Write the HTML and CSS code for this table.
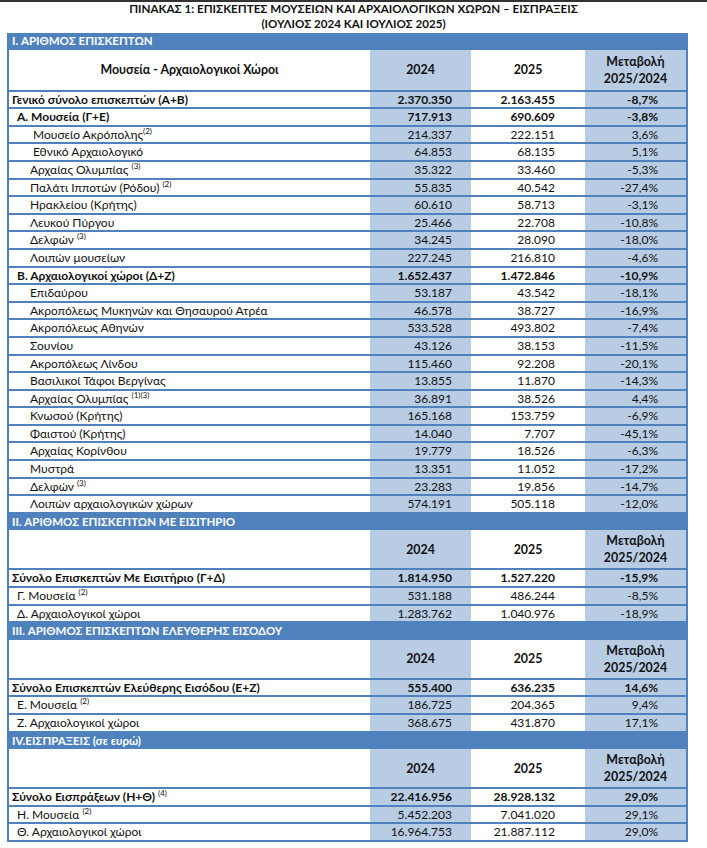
FILE: index.html
```html
<!DOCTYPE html>
<html lang="el">
<head>
    <meta charset="UTF-8">
    <meta name="viewport" content="width=device-width, initial-scale=1.0">
    <title>Πίνακας 1 - Επισκέπτες μουσείων</title>
    <link rel="stylesheet" href="styles.css">
</head>
<body>

    <div class="topbar"></div>

    <h1 class="title">ΠΙΝΑΚΑΣ 1: ΕΠΙΣΚΕΠΤΕΣ ΜΟΥΣΕΙΩΝ ΚΑΙ ΑΡΧΑΙΟΛΟΓΙΚΩΝ ΧΩΡΩΝ – ΕΙΣΠΡΑΞΕΙΣ<br>(ΙΟΥΛΙΟΣ 2024 ΚΑΙ ΙΟΥΛΙΟΣ 2025)</h1>

    <table class="stats">
        <colgroup>
            <col class="c-name">
            <col class="c-y1">
            <col class="c-y2">
            <col class="c-chg">
        </colgroup>

        <tbody>
            <tr class="section"><td colspan="4">I. ΑΡΙΘΜΟΣ ΕΠΙΣΚΕΠΤΩΝ</td></tr>
            <tr class="head first">
                <td class="name">Μουσεία - Αρχαιολογικοί Χώροι</td>
                <td class="y1">2024</td>
                <td class="y2">2025</td>
                <td class="chg">Μεταβολή<br>2025/2024</td>
            </tr>
            <tr class="bold"><td class="name">Γενικό σύνολο επισκεπτών (Α+Β)</td><td class="y1">2.370.350</td><td class="y2">2.163.455</td><td class="chg">-8,7%</td></tr>
            <tr class="bold"><td class="name l1">Α. Μουσεία (Γ+Ε)</td><td class="y1">717.913</td><td class="y2">690.609</td><td class="chg">-3,8%</td></tr>
            <tr><td class="name l3">Μουσείο Ακρόπολης<sup>(2)</sup></td><td class="y1">214.337</td><td class="y2">222.151</td><td class="chg">3,6%</td></tr>
            <tr><td class="name l3">Εθνικό Αρχαιολογικό</td><td class="y1">64.853</td><td class="y2">68.135</td><td class="chg">5,1%</td></tr>
            <tr><td class="name l2">Αρχαίας Ολυμπίας <sup>(3)</sup></td><td class="y1">35.322</td><td class="y2">33.460</td><td class="chg">-5,3%</td></tr>
            <tr><td class="name l2">Παλάτι Ιπποτών (Ρόδου) <sup>(2)</sup></td><td class="y1">55.835</td><td class="y2">40.542</td><td class="chg">-27,4%</td></tr>
            <tr><td class="name l2">Ηρακλείου (Κρήτης)</td><td class="y1">60.610</td><td class="y2">58.713</td><td class="chg">-3,1%</td></tr>
            <tr><td class="name l2">Λευκού Πύργου</td><td class="y1">25.466</td><td class="y2">22.708</td><td class="chg">-10,8%</td></tr>
            <tr><td class="name l2">Δελφών <sup>(3)</sup></td><td class="y1">34.245</td><td class="y2">28.090</td><td class="chg">-18,0%</td></tr>
            <tr><td class="name l2">Λοιπών μουσείων</td><td class="y1">227.245</td><td class="y2">216.810</td><td class="chg">-4,6%</td></tr>
            <tr class="bold"><td class="name l1">Β. Αρχαιολογικοί χώροι (Δ+Ζ)</td><td class="y1">1.652.437</td><td class="y2">1.472.846</td><td class="chg">-10,9%</td></tr>
            <tr><td class="name l2">Επιδαύρου</td><td class="y1">53.187</td><td class="y2">43.542</td><td class="chg">-18,1%</td></tr>
            <tr><td class="name l2">Ακροπόλεως Μυκηνών και Θησαυρού Ατρέα</td><td class="y1">46.578</td><td class="y2">38.727</td><td class="chg">-16,9%</td></tr>
            <tr><td class="name l2">Ακροπόλεως Αθηνών</td><td class="y1">533.528</td><td class="y2">493.802</td><td class="chg">-7,4%</td></tr>
            <tr><td class="name l2">Σουνίου</td><td class="y1">43.126</td><td class="y2">38.153</td><td class="chg">-11,5%</td></tr>
            <tr><td class="name l2">Ακροπόλεως Λίνδου</td><td class="y1">115.460</td><td class="y2">92.208</td><td class="chg">-20,1%</td></tr>
            <tr><td class="name l2">Βασιλικοί Τάφοι Βεργίνας</td><td class="y1">13.855</td><td class="y2">11.870</td><td class="chg">-14,3%</td></tr>
            <tr><td class="name l2">Αρχαίας Ολυμπίας <sup>(1)(3)</sup></td><td class="y1">36.891</td><td class="y2">38.526</td><td class="chg">4,4%</td></tr>
            <tr><td class="name l2">Κνωσού (Κρήτης)</td><td class="y1">165.168</td><td class="y2">153.759</td><td class="chg">-6,9%</td></tr>
            <tr><td class="name l2">Φαιστού (Κρήτης)</td><td class="y1">14.040</td><td class="y2">7.707</td><td class="chg">-45,1%</td></tr>
            <tr><td class="name l2">Αρχαίας Κορίνθου</td><td class="y1">19.779</td><td class="y2">18.526</td><td class="chg">-6,3%</td></tr>
            <tr><td class="name l2">Μυστρά</td><td class="y1">13.351</td><td class="y2">11.052</td><td class="chg">-17,2%</td></tr>
            <tr><td class="name l2">Δελφών <sup>(3)</sup></td><td class="y1">23.283</td><td class="y2">19.856</td><td class="chg">-14,7%</td></tr>
            <tr><td class="name l2">Λοιπών αρχαιολογικών χώρων</td><td class="y1">574.191</td><td class="y2">505.118</td><td class="chg">-12,0%</td></tr>
        </tbody>

        <tbody>
            <tr class="section"><td colspan="4">II. ΑΡΙΘΜΟΣ ΕΠΙΣΚΕΠΤΩΝ ΜΕ ΕΙΣΙΤΗΡΙΟ</td></tr>
            <tr class="head">
                <td class="name"></td>
                <td class="y1">2024</td>
                <td class="y2">2025</td>
                <td class="chg">Μεταβολή<br>2025/2024</td>
            </tr>
            <tr class="bold"><td class="name">Σύνολο Επισκεπτών Με Εισιτήριο (Γ+Δ)</td><td class="y1">1.814.950</td><td class="y2">1.527.220</td><td class="chg">-15,9%</td></tr>
            <tr><td class="name l1">Γ. Μουσεία <sup>(2)</sup></td><td class="y1">531.188</td><td class="y2">486.244</td><td class="chg">-8,5%</td></tr>
            <tr><td class="name l1">Δ. Αρχαιολογικοί χώροι</td><td class="y1">1.283.762</td><td class="y2">1.040.976</td><td class="chg">-18,9%</td></tr>
        </tbody>

        <tbody>
            <tr class="section"><td colspan="4">III. ΑΡΙΘΜΟΣ ΕΠΙΣΚΕΠΤΩΝ ΕΛΕΥΘΕΡΗΣ ΕΙΣΟΔΟΥ</td></tr>
            <tr class="head">
                <td class="name"></td>
                <td class="y1">2024</td>
                <td class="y2">2025</td>
                <td class="chg">Μεταβολή<br>2025/2024</td>
            </tr>
            <tr class="bold"><td class="name">Σύνολο Επισκεπτών Ελεύθερης Εισόδου (Ε+Ζ)</td><td class="y1">555.400</td><td class="y2">636.235</td><td class="chg">14,6%</td></tr>
            <tr><td class="name l1">Ε. Μουσεία <sup>(2)</sup></td><td class="y1">186.725</td><td class="y2">204.365</td><td class="chg">9,4%</td></tr>
            <tr><td class="name l1">Ζ. Αρχαιολογικοί χώροι</td><td class="y1">368.675</td><td class="y2">431.870</td><td class="chg">17,1%</td></tr>
        </tbody>

        <tbody>
            <tr class="section"><td colspan="4">IV.ΕΙΣΠΡΑΞΕΙΣ (σε ευρώ)</td></tr>
            <tr class="head">
                <td class="name"></td>
                <td class="y1">2024</td>
                <td class="y2">2025</td>
                <td class="chg">Μεταβολή<br>2025/2024</td>
            </tr>
            <tr class="bold"><td class="name">Σύνολο Εισπράξεων (Η+Θ) <sup>(4)</sup></td><td class="y1">22.416.956</td><td class="y2">28.928.132</td><td class="chg">29,0%</td></tr>
            <tr><td class="name l1">Η. Μουσεία <sup>(2)</sup></td><td class="y1">5.452.203</td><td class="y2">7.041.020</td><td class="chg">29,1%</td></tr>
            <tr><td class="name l1">Θ. Αρχαιολογικοί χώροι</td><td class="y1">16.964.753</td><td class="y2">21.887.112</td><td class="chg">29,0%</td></tr>
        </tbody>
    </table>

</body>
</html>
```

FILE: styles.css
```css
body {
    margin: 0;
    font-family: Lato, "Open Sans", sans-serif;
    font-size: 12px;
    color: #111;
    background-color: #fff;
}
.topbar {
    height: 2px;
    background-color: #333;
}
.title {
    margin: -1px 0 2px;
    text-align: center;
    font-size: 11.6px;
    font-weight: bold;
    line-height: 15px;
}
.stats {
    width: 679px;
    margin-left: 7px;
    border-collapse: collapse;
    table-layout: fixed;
}
.c-name { width: 362px; }
.c-y1 { width: 101px; }
.c-y2 { width: 114px; }
.c-chg { width: 102px; }
.stats td {
    height: 15.6px;
    padding: 0;
    line-height: 15.6px;
    border-bottom: 2px solid #4f81bd;
    white-space: nowrap;
}
.stats td:first-child {
    border-left: 2px solid #4f81bd;
}
.stats td:last-child {
    border-right: 2px solid #4f81bd;
}
.stats .y1,
.stats .chg {
    background-color: #b8cce4;
}
.stats .y1 {
    text-align: right;
    padding-right: 19px;
}
.stats .y2 {
    text-align: right;
    padding-right: 30px;
}
.stats .chg {
    text-align: right;
    padding-right: 28px;
}
.stats .name {
    padding-left: 3px;
}
.stats .name.l1 { padding-left: 8px; }
.stats .name.l2 { padding-left: 21px; }
.stats .name.l3 { padding-left: 24px; }
.bold td {
    font-weight: bold;
}
.stats .section td {
    background-color: #4f81bd;
    color: #fff;
    font-size: 11.5px;
    font-weight: bold;
    padding-left: 3px;
    height: 16.6px;
    line-height: 16.6px;
    border-bottom: 0;
}
.stats .head td {
    height: 38px;
    line-height: 17px;
    font-size: 12.4px;
    font-weight: bold;
    text-align: center;
    padding: 0;
}
.stats .head.first td {
    height: 40px;
}
sup {
    font-size: 8px;
    line-height: 0;
    vertical-align: 5px;
    font-weight: normal;
}
```
